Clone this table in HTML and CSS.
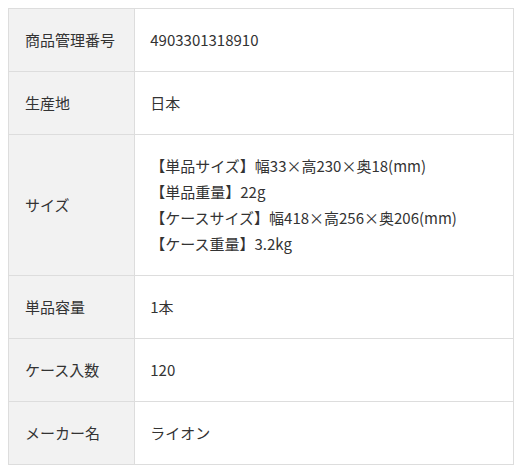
FILE: index.html
```html
<!DOCTYPE html>
<html lang="ja">
<head>
<meta charset="utf-8">
<link rel="stylesheet" href="styles.css">
</head>
<body>
<table class="spec">
  <tr><th>商品管理番号</th><td>4903301318910</td></tr>
  <tr><th>生産地</th><td>日本</td></tr>
  <tr><th>サイズ</th><td>【単品サイズ】幅33×高230×奥18(mm)<br>【単品重量】22g<br>【ケースサイズ】幅418×高256×奥206(mm)<br>【ケース重量】3.2kg</td></tr>
  <tr><th>単品容量</th><td>1本</td></tr>
  <tr><th>ケース入数</th><td>120</td></tr>
  <tr><th>メーカー名</th><td>ライオン</td></tr>
</table>
</body>
</html>
```
FILE: styles.css
```css
body {
  margin: 8px;
  background: #fff;
  font-family: "Noto Sans CJK JP", "Noto Sans", sans-serif;
  color: #333;
}
.spec {
  width: 506px;
  border-collapse: collapse;
  font-size: 15px;
  line-height: 26px;
}
.spec th, .spec td {
  border: 1px solid #ddd;
  padding: 18px 15px 18px 16px;
  vertical-align: middle;
  text-align: left;
  font-weight: normal;
}
.spec th {
  width: 25%;
  background: #f2f2f2;
  box-sizing: border-box;
}
.spec td {
  padding-left: 15px;
}
```
